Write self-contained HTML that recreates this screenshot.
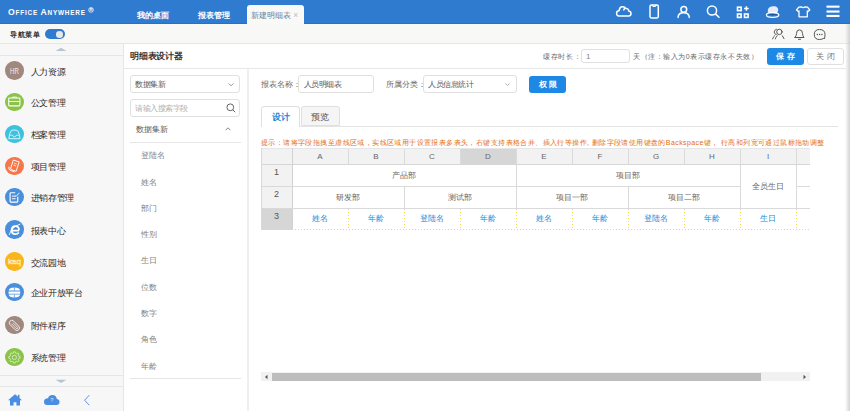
<!DOCTYPE html>
<html><head><meta charset="utf-8">
<style>
*{margin:0;padding:0;box-sizing:border-box}
html,body{width:850px;height:411px;overflow:hidden;background:#fff;font-family:"Liberation Sans",sans-serif;color:#333}
.a{position:absolute}
#top{left:0;top:0;width:850px;height:24px;background:#2f7bd0;border-bottom:1px solid #2b6fbf}
#topline{display:none}
.logo{left:8px;top:3px;color:#fff;letter-spacing:0.8px;font-weight:bold;white-space:nowrap;line-height:14px}
.tab{top:8px;color:#fff;font-size:8.3px;font-weight:bold;white-space:nowrap;line-height:14px}
#atab{left:247px;top:5px;width:57px;height:20px;background:#f9f9f8;border-radius:3px 3px 0 0}
#nav{left:0;top:24px;width:850px;height:20px;background:#f8f8f6;border-bottom:1px solid #e6e6e4}
#side{left:0;top:44px;width:124px;height:367px;background:#f7f7f7;border-right:1px solid #e6e6e6}
.st{font-size:8.5px;letter-spacing:-0.3px;font-weight:normal;left:30.5px;color:#2a2a2a;white-space:nowrap;line-height:12px}
#main{left:124px;top:44px;width:722px;height:367px;background:#fff}
#rstrip{left:845px;top:24px;width:5px;height:387px;background:linear-gradient(to right,rgba(200,200,200,0) 0%,rgba(200,200,200,.45) 55%,rgba(200,200,200,.8) 100%)}
.txt{white-space:nowrap;line-height:12px}
.inp{border:1px solid #e0e0e0;border-radius:3px;background:#fff}
.btn{border-radius:3px;background:#1e88e5;color:#fff;font-weight:bold;text-align:center;font-size:8px;line-height:18px}
.fi{left:141px;font-size:8px;color:#808080;white-space:nowrap;line-height:12px}
.th{font-size:8px;color:#666;text-align:center;line-height:12px}
.rn{font-size:9px;color:#555;text-align:center;line-height:12px}
.cell{font-size:8px;color:#666;text-align:center;line-height:12px;white-space:nowrap}
.cb{font-size:8px;color:#2087d6;text-align:center;line-height:12px;white-space:nowrap}
</style></head><body>
<div class="a" id="top"></div>
<div class="a" id="topline"></div>
<div class="a logo"><span style="font-size:8.6px">O</span><span style="font-size:6.4px">FFICE&nbsp;</span><span style="font-size:8.6px">A</span><span style="font-size:6.4px">NYWHERE</span></div>
<svg class="a" style="left:88px;top:6.5px" width="7" height="7"><circle cx="3" cy="2.9" r="2.3" fill="none" stroke="#fff" stroke-width="0.8"/><text x="3" y="4.3" font-size="3.6" font-weight="bold" fill="#fff" text-anchor="middle" font-family="Liberation Sans">R</text></svg>
<div class="a tab" style="left:137px">我的桌面</div>
<div class="a tab" style="left:198px">报表管理</div>
<div class="a" id="atab"></div>
<div class="a tab" style="left:251px;color:#6a7c95;font-weight:normal">新建明细表 <span style="color:#bbb">×</span></div>
<!-- top icons -->
<svg class="a" style="left:0;top:0" width="850" height="23" viewBox="0 0 850 23">
 <g fill="none" stroke="#fff" stroke-width="1.5" stroke-linecap="round" stroke-linejoin="round">
  <path d="M618.8 15.9 H628.8 Q631 15.9 631 13.5 Q631 11 628.6 10.9 Q628.4 8.2 626 8.6 Q624.5 6.3 621.8 6.8 Q619.3 7.5 619.3 10.6 Q616.6 11 616.6 13.3 Q616.6 15.9 618.8 15.9 Z"/>
  <path d="M624.8 8.3 Q623.8 9 623.8 10"/>
  <rect x="650" y="5.1" width="8.3" height="12.8" rx="1.3"/>
  <path d="M652.3 5.3 L653.2 6.5 H655.1 L656 5.3" stroke-width="1.1"/>
  <circle cx="683.8" cy="9.4" r="2.9"/>
  <path d="M678 17.4 Q678.3 12.8 683.6 12.8 Q689 12.8 689.3 17.4"/>
  <circle cx="712" cy="10.5" r="4.6"/>
  <line x1="715.4" y1="13.9" x2="719" y2="17.3"/>
  <path d="M807.5 7.2 L809.8 10 L808 11.5 L807.3 11 V16.8 H799 V11 L798.3 11.5 L796.5 10 L798.8 7.2 L801.3 6.8 Q803.2 8.3 805 6.8 Z" stroke-width="1.3"/>
 </g>
 <g fill="none" stroke="#fff" stroke-width="1.6">
  <rect x="737.5" y="7.2" width="3.6" height="3.4"/>
  <rect x="737.5" y="14" width="3.6" height="3.4"/>
  <rect x="744.5" y="14" width="3.6" height="3.4"/>
 </g>
 <path d="M746.4 6.2 V10.8 M744.1 8.5 H748.7" stroke="#fff" stroke-width="1.5"/>
 <g fill="#fff"><rect x="826.5" y="5.6" width="13" height="2.1"/><rect x="826.5" y="10.5" width="13" height="2.1"/><rect x="826.5" y="14.9" width="13" height="2.1"/></g>
 <path d="M768.2 12.8 Q766.9 9.5 769.5 7.3 Q772 5.7 775 6.3 Q778.3 7.2 778.2 10.3 Q778 12.6 776 13.4 Q773 14.3 768.2 12.8 Z" fill="#e6edf7"/>
 <ellipse cx="772.6" cy="15" rx="6.2" ry="2.3" fill="none" stroke="#fff" stroke-width="1.3"/>
 <path d="M767.4 14.6 Q772.5 12.6 777.8 14.6 Q772.5 16.2 767.4 14.6 Z" fill="#1d5aa5"/>
</svg>

<div class="a" id="nav"></div>
<div class="a txt" style="left:10px;top:28.5px;font-size:7px;letter-spacing:0.5px;color:#333;font-weight:bold">导航菜单</div>
<div class="a" style="left:45.4px;top:29.2px;width:19.4px;height:10px;border-radius:5px;background:#2f7bd0"></div>
<div class="a" style="left:55.6px;top:30.6px;width:7.8px;height:7.4px;border-radius:50%;background:#e9e9e9"></div>
<!-- nav right icons -->
<svg class="a" style="left:760px;top:24px" width="90" height="20" viewBox="760 24 90 20">
 <g fill="none" stroke="#555" stroke-width="1" stroke-linecap="round">
  <circle cx="779.4" cy="31.9" r="2.7"/>
  <path d="M776.5 29.2 Q774.2 29.8 774.2 32 Q774.2 34.2 776.4 34.7" stroke-width="0.9"/>
  <path d="M772.6 38.9 Q773 36.6 774.9 35.4" stroke-width="0.9"/>
  <path d="M775.3 38.9 Q775.7 36.9 777.2 35.7" stroke-width="0.9"/>
  <path d="M782.4 35.8 L784 38.7"/>
  <path d="M795 37.5 H804 Q802.5 36 802.5 33.5 Q802.5 29.8 799.5 29.8 Q796.5 29.8 796.5 33.5 Q796.5 36 795 37.5 Z"/>
  <line x1="798.5" y1="39.3" x2="800.5" y2="39.3"/>
  <path d="M824.5 38.5 Q825 37 825 34.5 Q825 29.5 819.5 29.5 Q814.3 29.5 814.3 34.5 Q814.3 39.5 819.5 39.5 Q822 39.5 823.5 38.5 Z"/>
 </g>
 <g fill="#555"><circle cx="817.3" cy="34.5" r="0.7"/><circle cx="819.6" cy="34.5" r="0.7"/><circle cx="821.9" cy="34.5" r="0.7"/></g>
</svg>

<div class="a" id="side"></div>
<div class="a" style="left:0;top:55px;width:123px;height:1px;background:#e6e6e6"></div>
<svg class="a" style="left:55px;top:47px" width="12" height="5"><path d="M0.5 4 L6 0.8 L11.5 4 Z" fill="#b9c3cf"/></svg>
<div class="a" style="left:5.2px;top:61.40px;width:18.4px;height:18.4px;border-radius:50%;background:#a1887f"><svg width="18.4" height="18.4" viewBox="0 0 18 18" style="display:block"><text x="9.2" y="12.3" font-size="8.2" fill="#f3ece8" text-anchor="middle" font-family="Liberation Sans" transform="translate(9.2 0) scale(0.72 1) translate(-9.2 0)">HR</text></svg></div>
<div class="a st" style="top:65.70px">人力资源</div>
<div class="a" style="left:5.2px;top:93.00px;width:18.4px;height:18.4px;border-radius:50%;background:#8bc34a"><svg width="18.4" height="18.4" viewBox="0 0 18 18" style="display:block"><rect x="3.6" y="5" width="11" height="7.6" rx="0.8" fill="none" stroke="#fff" stroke-width="1"/><line x1="3.6" y1="8.3" x2="14.6" y2="8.3" stroke="#fff" stroke-width="0.9"/><path d="M7.3 5 V4 H11.3 V5" fill="none" stroke="#fff" stroke-width="0.9"/></svg></div>
<div class="a st" style="top:97.30px">公文管理</div>
<div class="a" style="left:5.2px;top:125.10px;width:18.4px;height:18.4px;border-radius:50%;background:#3ec1dd"><svg width="18.4" height="18.4" viewBox="0 0 18 18" style="display:block"><path d="M3.7 13.4 L4.6 8.7 Q5.5 5 7.5 5 H10.9 Q12.9 5 13.8 8.7 L14.7 13.4 Z" fill="none" stroke="#e6f8fc" stroke-width="0.9"/><path d="M5 10 H7.4 Q7.8 11.7 9.2 11.7 Q10.6 11.7 11 10 H13.4" fill="none" stroke="#e6f8fc" stroke-width="0.8"/></svg></div>
<div class="a st" style="top:129.40px">档案管理</div>
<div class="a" style="left:5.2px;top:157.00px;width:18.4px;height:18.4px;border-radius:50%;background:#f4774a"><svg width="18.4" height="18.4" viewBox="0 0 18 18" style="display:block"><g transform="rotate(18 9.2 9.2)"><path d="M6.3 3.6 H12.3 V13.2 H7.6 Q6.3 13.2 6.3 11.9 Z" fill="none" stroke="#fff" stroke-width="0.85"/><path d="M4.2 11.2 Q4.2 14.2 7.2 14.2 H11" fill="none" stroke="#fff" stroke-width="0.85"/><path d="M8 6.3 H10.6 M8 8.3 H10.6" stroke="#fff" stroke-width="0.7"/></g></svg></div>
<div class="a st" style="top:161.30px">项目管理</div>
<div class="a" style="left:5.2px;top:187.60px;width:18.4px;height:18.4px;border-radius:50%;background:#4a8fdc"><svg width="18.4" height="18.4" viewBox="0 0 18 18" style="display:block"><path d="M12.5 8.5 V13 Q12.5 13.8 11.7 13.8 H5.8 Q5 13.8 5 13 V5.5 Q5 4.7 5.8 4.7 H10" fill="none" stroke="#fff" stroke-width="1.1"/><line x1="6.8" y1="8" x2="10" y2="8" stroke="#fff" stroke-width="0.9"/><line x1="6.8" y1="10.5" x2="10.5" y2="10.5" stroke="#fff" stroke-width="0.9"/><path d="M9.5 7.2 L10.8 8.3 L14 4.8" fill="none" stroke="#fff" stroke-width="0.9"/></svg></div>
<div class="a st" style="top:191.90px">进销存管理</div>
<div class="a" style="left:5.2px;top:220.40px;width:18.4px;height:18.4px;border-radius:50%;background:#4a8fdc"><svg width="18.4" height="18.4" viewBox="0 0 18 18" style="display:block"><path d="M13.8 10.4 H6.4 Q6.6 6.1 10.1 6.1 Q13.6 6.1 13.8 10 M6.4 10.4 Q6.7 13.8 10.1 13.8 Q12.3 13.8 13.5 12.2" fill="none" stroke="#fff" stroke-width="1.7"/><path d="M4.2 14.6 Q6 7 15 4" fill="none" stroke="#fff" stroke-width="0.9"/></svg></div>
<div class="a st" style="top:224.70px">报表中心</div>
<div class="a" style="left:5.2px;top:252.40px;width:18.4px;height:18.4px;border-radius:50%;background:#f9b51b"><svg width="18.4" height="18.4" viewBox="0 0 18 18" style="display:block"><text x="9.3" y="11.8" font-size="7.6" fill="none" stroke="#fff3cf" stroke-width="0.45" text-anchor="middle" font-family="Liberation Sans" transform="translate(9.3 0) scale(1.05 1) translate(-9.3 0)">kaq</text></svg></div>
<div class="a st" style="top:256.70px">交流园地</div>
<div class="a" style="left:5.2px;top:282.80px;width:18.4px;height:18.4px;border-radius:50%;background:#4a8fdc"><svg width="18.4" height="18.4" viewBox="0 0 18 18" style="display:block"><path d="M3.6 7.4 Q4 4.3 9.2 4.3 Q14.4 4.3 14.8 7.4 Z M3.5 8.3 H14.9 V10.4 H3.5 Z M3.6 11.3 H14.8 Q14.4 14.2 9.2 14.2 Q4 14.2 3.6 11.3 Z" fill="#fff"/><path d="M9.2 4 V7.5 M9.2 11.2 V14.5" stroke="#4a8fdc" stroke-width="0.7"/></svg></div>
<div class="a st" style="top:287.10px">企业开放平台</div>
<div class="a" style="left:5.2px;top:315.80px;width:18.4px;height:18.4px;border-radius:50%;background:#a1887f"><svg width="18.4" height="18.4" viewBox="0 0 18 18" style="display:block"><g transform="rotate(-45 9.2 9.2)"><rect x="6.7" y="3.2" width="5" height="12" rx="2.5" fill="none" stroke="#f2ece8" stroke-width="0.9"/><path d="M8.3 5.8 V12.3 Q8.3 13.5 9.2 13.5 Q10.1 13.5 10.1 12.3 V6.5" fill="none" stroke="#f2ece8" stroke-width="0.8"/></g></svg></div>
<div class="a st" style="top:320.10px">附件程序</div>
<div class="a" style="left:5.2px;top:347.50px;width:18.4px;height:18.4px;border-radius:50%;background:#8bc34a"><svg width="18.4" height="18.4" viewBox="0 0 18 18" style="display:block"><path d="M13.48 8.17 L14.74 8.41 L14.74 9.99 L13.48 10.23 L12.95 11.50 L13.68 12.56 L12.56 13.68 L11.50 12.95 L10.23 13.48 L9.99 14.74 L8.41 14.74 L8.17 13.48 L6.90 12.95 L5.84 13.68 L4.72 12.56 L5.45 11.50 L4.92 10.23 L3.66 9.99 L3.66 8.41 L4.92 8.17 L5.45 6.90 L4.72 5.84 L5.84 4.72 L6.90 5.45 L8.17 4.92 L8.41 3.66 L9.99 3.66 L10.23 4.92 L11.50 5.45 L12.56 4.72 L13.68 5.84 L12.95 6.90 Z" fill="none" stroke="#e6f3d8" stroke-width="0.7" stroke-linejoin="round"/><circle cx="9.2" cy="9.2" r="2.1" fill="none" stroke="#e6f3d8" stroke-width="0.7"/></svg></div>
<div class="a st" style="top:351.80px">系统管理</div>
<div class="a" style="left:0;top:375px;width:123px;height:1px;background:#e6e6e6"></div>
<svg class="a" style="left:55px;top:379px" width="12" height="5"><path d="M0.5 0.8 L6 4 L11.5 0.8 Z" fill="#b9c3cf"/></svg>
<div class="a" style="left:0;top:386px;width:123px;height:1px;background:#e6e6e6"></div>
<svg class="a" style="left:0;top:387px" width="122" height="24" viewBox="0 387 122 24">
 <path d="M15 394.2 L8 400.3 H10 V405.6 H13.6 V402.2 H16.4 V405.6 H20 V400.3 H22 L19.5 398 V394.8 H18 V396.6 Z" fill="#4a8ee4"/>
 <path d="M47 405 H56.5 Q59.5 405 59.5 402 Q59.5 399.3 56.8 399 Q56.3 395 52.5 395 Q49 395 48 398.3 Q44 398.5 44 401.8 Q44 405 47 405 Z" fill="#4a8ee4"/>
 <text x="51.8" y="402.3" font-size="5" fill="#e8f0fb" font-family="Liberation Sans" text-anchor="middle">?</text>
 <path d="M89.3 395.2 L84.6 400.2 L89.3 405.2" fill="none" stroke="#5a95e0" stroke-width="1"/>
</svg>

<div class="a" id="main"></div>
<div class="a" style="left:124px;top:68px;width:722px;height:1px;background:#e8e8e8"></div>
<div class="a txt" style="left:130px;top:50px;font-size:8.8px;letter-spacing:-0.2px;color:#333;font-weight:bold">明细表设计器</div>
<div class="a txt" style="left:543px;top:51px;font-size:7px;letter-spacing:0.7px;color:#666">缓存时长：</div>
<div class="a inp" style="left:581px;top:49px;width:49px;height:14px"></div>
<div class="a txt" style="left:586px;top:51px;font-size:8px;color:#888">1</div>
<div class="a txt" style="left:633px;top:51px;font-size:7px;letter-spacing:0.55px;color:#666">天（注：输入为0表示缓存永不失效）</div>
<div class="a btn" style="left:767px;top:47.5px;width:37px;height:17px">保 存</div>
<div class="a inp" style="left:807px;top:47.5px;width:37px;height:17px;color:#777;font-size:8px;text-align:center;line-height:16px">关 闭</div>

<!-- left panel -->
<div class="a inp" style="left:130px;top:75px;width:110px;height:18px"></div>
<div class="a txt" style="left:135px;top:79px;font-size:8px;letter-spacing:-0.5px;color:#555">数据集新</div>
<svg class="a" style="left:228px;top:83px" width="6" height="4"><path d="M0.5 0.5 L3 2.8 L5.5 0.5" fill="none" stroke="#888" stroke-width="0.8"/></svg>
<div class="a inp" style="left:130px;top:99px;width:110px;height:18px"></div>
<div class="a txt" style="left:135px;top:103px;font-size:8px;letter-spacing:-0.5px;color:#b0b0b0">请输入搜索字段</div>
<svg class="a" style="left:226px;top:103px" width="10" height="10"><circle cx="4.3" cy="4.3" r="3.4" fill="none" stroke="#666" stroke-width="1"/><line x1="6.8" y1="6.8" x2="9.2" y2="9.2" stroke="#666" stroke-width="1"/></svg>
<div class="a txt" style="left:135.5px;top:124px;font-size:8px;color:#555">数据集新</div>
<svg class="a" style="left:225px;top:127px" width="6" height="4"><path d="M0.5 3.3 L3 0.8 L5.5 3.3" fill="none" stroke="#777" stroke-width="0.9"/></svg>
<div class="a" style="left:130px;top:142px;width:111px;height:1px;background:#e6e6e6"></div>
<div class="a fi" style="top:150px">登陆名</div>
<div class="a fi" style="top:177px">姓名</div>
<div class="a fi" style="top:203px">部门</div>
<div class="a fi" style="top:229px">性别</div>
<div class="a fi" style="top:255px">生日</div>
<div class="a fi" style="top:281.5px">位数</div>
<div class="a fi" style="top:307.5px">数字</div>
<div class="a fi" style="top:334px">角色</div>
<div class="a fi" style="top:360.5px">年龄</div>
<div class="a" style="left:130px;top:378px;width:111px;height:1px;background:#e6e6e6"></div>
<div class="a" style="left:247px;top:69px;width:2px;height:342px;background:#efefef"></div>

<!-- right panel form -->
<div class="a txt" style="left:261px;top:79px;font-size:8px;color:#666">报表名称：</div>
<div class="a inp" style="left:298px;top:75px;width:76px;height:18px"></div>
<div class="a txt" style="left:304px;top:79px;font-size:8px;letter-spacing:-0.6px;color:#555">人员明细表</div>
<div class="a txt" style="left:386px;top:79px;font-size:8px;color:#666">所属分类：</div>
<div class="a inp" style="left:423px;top:75px;width:94px;height:18px"></div>
<div class="a txt" style="left:428px;top:79px;font-size:8px;letter-spacing:-0.5px;color:#555">人员信息统计</div>
<svg class="a" style="left:505px;top:83px" width="5" height="4"><path d="M0.5 0.5 L2.5 2.5 L4.5 0.5" fill="none" stroke="#999" stroke-width="0.8"/></svg>
<div class="a btn" style="left:529px;top:75.5px;width:37px;height:17px;letter-spacing:2px;text-indent:2px">权限</div>

<!-- tabs -->
<div class="a" style="left:261px;top:106px;width:39px;height:21px;background:#fff;border:1px solid #e0e0e0;border-bottom:none;border-radius:3px 3px 0 0"></div>
<div class="a" style="left:301px;top:106px;width:39px;height:20px;background:#f5f5f5;border:1px solid #e0e0e0;border-radius:3px 3px 0 0"></div>
<div class="a" style="left:300px;top:126px;width:538px;height:1px;background:#e4e4e4"></div>
<div class="a txt" style="left:271.5px;top:111px;font-size:9px;color:#1f86d6;font-weight:bold">设计</div>
<div class="a txt" style="left:311px;top:111px;font-size:9px;color:#555">预览</div>
<div class="a txt" style="left:261px;top:137px;font-size:7px;letter-spacing:0.41px;color:#e56c0c">提示：请将字段拖拽至虚线区域，实线区域用于设置报表多表头，右键支持表格合并、插入行等操作, 删除字段请使用键盘的Backspace键， 行高和列宽可通过鼠标拖动调整</div>

<div class="a" style="left:261px;top:148px;width:549px;height:16px;background:#f2f2f2"></div>
<div class="a" style="left:261px;top:148px;width:549px;height:1px;background:#e6e6e6"></div>
<div class="a" style="left:261px;top:164px;width:549px;height:1px;background:#d6d6d6"></div>
<div class="a" style="left:261px;top:165px;width:31px;height:65px;background:#f2f2f2"></div>
<div class="a" style="left:261px;top:209px;width:31px;height:21px;background:#d6d6d6"></div>
<div class="a" style="left:261px;top:148px;width:1px;height:82px;background:#d9d9d9"></div>
<div class="a" style="left:292px;top:148px;width:1px;height:82px;background:#d2d2d2"></div>
<div class="a" style="left:460px;top:149px;width:56px;height:15px;background:#d6d6d6"></div>
<div class="a th" style="left:292px;top:150.5px;width:56px">A</div>
<div class="a" style="left:348px;top:149px;width:1px;height:15px;background:#dadada"></div>
<div class="a th" style="left:348px;top:150.5px;width:56px">B</div>
<div class="a" style="left:404px;top:149px;width:1px;height:15px;background:#dadada"></div>
<div class="a th" style="left:404px;top:150.5px;width:56px">C</div>
<div class="a" style="left:460px;top:149px;width:1px;height:15px;background:#dadada"></div>
<div class="a th" style="left:460px;top:150.5px;width:56px">D</div>
<div class="a" style="left:516px;top:149px;width:1px;height:15px;background:#dadada"></div>
<div class="a th" style="left:516px;top:150.5px;width:56px">E</div>
<div class="a" style="left:572px;top:149px;width:1px;height:15px;background:#dadada"></div>
<div class="a th" style="left:572px;top:150.5px;width:56px">F</div>
<div class="a" style="left:628px;top:149px;width:1px;height:15px;background:#dadada"></div>
<div class="a th" style="left:628px;top:150.5px;width:56px">G</div>
<div class="a" style="left:684px;top:149px;width:1px;height:15px;background:#dadada"></div>
<div class="a th" style="left:684px;top:150.5px;width:56px">H</div>
<div class="a" style="left:740px;top:149px;width:1px;height:15px;background:#dadada"></div>
<div class="a th" style="left:740px;top:150.5px;width:56px">I</div>
<div class="a" style="left:796px;top:149px;width:1px;height:15px;background:#dadada"></div>
<div class="a rn" style="left:261px;top:165.5px;width:31px">1</div>
<div class="a" style="left:261px;top:186px;width:31px;height:1px;background:#d9d9d9"></div>
<div class="a rn" style="left:261px;top:187.5px;width:31px">2</div>
<div class="a" style="left:261px;top:208px;width:31px;height:1px;background:#d9d9d9"></div>
<div class="a rn" style="left:261px;top:209.5px;width:31px">3</div>
<div class="a" style="left:292px;top:186px;width:448px;height:1px;background:#dadada"></div>
<div class="a" style="left:796px;top:186px;width:14px;height:1px;background:#dadada"></div>
<div class="a" style="left:292px;top:208px;width:518px;height:1px;background:#dadada"></div>
<div class="a" style="left:516px;top:165px;width:1px;height:43px;background:#dadada"></div>
<div class="a" style="left:404px;top:187px;width:1px;height:21px;background:#dadada"></div>
<div class="a" style="left:628px;top:187px;width:1px;height:21px;background:#dadada"></div>
<div class="a" style="left:740px;top:165px;width:1px;height:43px;background:#dadada"></div>
<div class="a" style="left:796px;top:165px;width:1px;height:43px;background:#dadada"></div>
<div class="a cell" style="left:292px;top:169.5px;width:224px">产品部</div>
<div class="a cell" style="left:516px;top:169.5px;width:224px">项目部</div>
<div class="a cell" style="left:292px;top:191.5px;width:112px">研发部</div>
<div class="a cell" style="left:404px;top:191.5px;width:112px">测试部</div>
<div class="a cell" style="left:516px;top:191.5px;width:112px">项目一部</div>
<div class="a cell" style="left:628px;top:191.5px;width:112px">项目二部</div>
<div class="a cell" style="left:740px;top:180.5px;width:56px">全员生日</div>
<div class="a cb" style="left:292px;top:213px;width:56px">姓名</div>
<div class="a cb" style="left:348px;top:213px;width:56px">年龄</div>
<div class="a cb" style="left:404px;top:213px;width:56px">登陆名</div>
<div class="a cb" style="left:460px;top:213px;width:56px">年龄</div>
<div class="a cb" style="left:516px;top:213px;width:56px">姓名</div>
<div class="a cb" style="left:572px;top:213px;width:56px">年龄</div>
<div class="a cb" style="left:628px;top:213px;width:56px">登陆名</div>
<div class="a cb" style="left:684px;top:213px;width:56px">年龄</div>
<div class="a cb" style="left:740px;top:213px;width:56px">生日</div>
<div class="a" style="left:348px;top:209px;width:1px;height:21px;background:repeating-linear-gradient(to bottom,#f3e13c 0,#f3e13c 1px,transparent 1px,transparent 3px)"></div>
<div class="a" style="left:404px;top:209px;width:1px;height:21px;background:repeating-linear-gradient(to bottom,#f3e13c 0,#f3e13c 1px,transparent 1px,transparent 3px)"></div>
<div class="a" style="left:460px;top:209px;width:1px;height:21px;background:repeating-linear-gradient(to bottom,#f3e13c 0,#f3e13c 1px,transparent 1px,transparent 3px)"></div>
<div class="a" style="left:516px;top:209px;width:1px;height:21px;background:repeating-linear-gradient(to bottom,#f3e13c 0,#f3e13c 1px,transparent 1px,transparent 3px)"></div>
<div class="a" style="left:572px;top:209px;width:1px;height:21px;background:repeating-linear-gradient(to bottom,#f3e13c 0,#f3e13c 1px,transparent 1px,transparent 3px)"></div>
<div class="a" style="left:628px;top:209px;width:1px;height:21px;background:repeating-linear-gradient(to bottom,#f3e13c 0,#f3e13c 1px,transparent 1px,transparent 3px)"></div>
<div class="a" style="left:684px;top:209px;width:1px;height:21px;background:repeating-linear-gradient(to bottom,#f3e13c 0,#f3e13c 1px,transparent 1px,transparent 3px)"></div>
<div class="a" style="left:740px;top:209px;width:1px;height:21px;background:repeating-linear-gradient(to bottom,#f3e13c 0,#f3e13c 1px,transparent 1px,transparent 3px)"></div>
<div class="a" style="left:796px;top:209px;width:1px;height:21px;background:repeating-linear-gradient(to bottom,#f3e13c 0,#f3e13c 1px,transparent 1px,transparent 3px)"></div>
<div class="a" style="left:292px;top:229px;width:518px;height:1px;background:repeating-linear-gradient(to right,#f3e13c 0,#f3e13c 1px,transparent 1px,transparent 3px)"></div>

<!-- scrollbar -->
<div class="a" style="left:261px;top:372px;width:549px;height:9px;background:#f1f1f1"></div>
<div class="a" style="left:272px;top:373px;width:489px;height:8px;background:#bdbdbd"></div>
<svg class="a" style="left:263px;top:373px" width="6" height="8"><path d="M2 4 L4.5 1.8 V6.2 Z" fill="#555"/></svg>
<svg class="a" style="left:802px;top:373px" width="6" height="8"><path d="M4 4 L1.5 1.8 V6.2 Z" fill="#555"/></svg>

<div class="a" id="rstrip"></div>
</body></html>
